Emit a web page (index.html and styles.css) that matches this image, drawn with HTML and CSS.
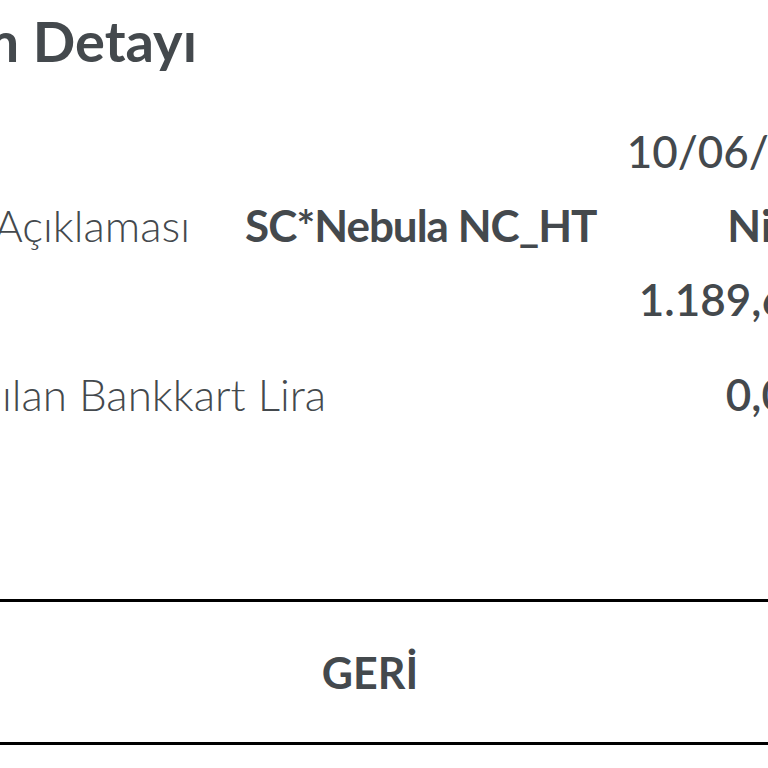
FILE: index.html
```html
<!DOCTYPE html>
<html lang="tr">
<head>
<meta charset="utf-8">
<title>İşlem Detayı</title>
<link rel="stylesheet" href="styles.css">
</head>
<body>
<div class="screen">
  <div class="sheet">
    <h1 class="title">İşlem Detayı</h1>
    <div class="rows">
      <div class="row">
        <span class="label">Tarih</span>
        <span class="value date">10/06/2024</span>
      </div>
      <div class="row">
        <span class="label">İşlem Açıklaması</span>
        <span class="value split"><b class="desc">SC*Nebula NC_HT</b><b class="city">Nicosia</b></span>
      </div>
      <div class="row">
        <span class="label">Tutar</span>
        <span class="value amount">1.189,60 TL</span>
      </div>
      <div class="row row-gap">
        <span class="label">Kullanılan Bankkart Lira</span>
        <span class="value amount">0,00 TL</span>
      </div>
    </div>
    <button class="back" type="button">GERİ</button>
  </div>
</div>
</body>
</html>
```

FILE: styles.css
```css
html, body {
  margin: 0;
  padding: 0;
  background: #ffffff;
}

.screen {
  width: 768px;
  height: 768px;
  overflow: hidden;
  font-family: Lato, "Liberation Sans", sans-serif;
  color: #44494d;
}

.sheet {
  width: 1000px;
  margin-left: -114px;
  display: flex;
  flex-direction: column;
}

.title {
  margin: 0 0 38px 0;
  padding: 6px 0 0 2px;
  font-size: 56px;
  line-height: 70px;
  font-weight: 700;
  letter-spacing: 0;
}

.rows {
  display: flex;
  flex-direction: column;
  padding-right: 15px;
}

.row {
  display: grid;
  grid-template-columns: 359px 1fr;
  font-size: 44px;
  line-height: 74px;
  white-space: nowrap;
}

.row-gap {
  margin-top: 21px;
}

.label {
  font-weight: 300;
}

.value {
  text-align: right;
  font-weight: 500;
}

.amount {
  font-weight: 600;
}

.split {
  display: flex;
  justify-content: space-between;
}

.desc, .city {
  font-weight: 700;
}

.desc {
  letter-spacing: -1px;
}

.back {
  margin: 168px 32px 0 0;
  height: 146px;
  border: 0;
  border-top: 3px solid #000000;
  border-bottom: 3px solid #000000;
  background: #ffffff;
  font-family: Lato, "Liberation Sans", sans-serif;
  font-size: 43px;
  font-weight: 700;
  color: #44494d;
  padding: 0;
  cursor: pointer;
}
```
